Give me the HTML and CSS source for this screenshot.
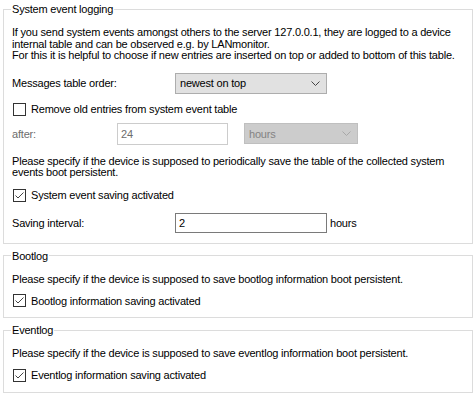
FILE: index.html
```html
<!DOCTYPE html>
<html lang="en">
<head>
    <meta charset="UTF-8">
    <title>System event logging</title>
    <link rel="stylesheet" href="styles.css">
</head>
<body>
<div class="page">
    <fieldset class="group">
        <legend>System event logging</legend>
        <p class="text">If you send system events amongst others to the server 127.0.0.1, they are logged to a device internal table and can be observed e.g. by LANmonitor.<br>For this it is helpful to choose if new entries are inserted on top or added to bottom of this table.</p>
        <div class="row row-order">
            <span class="label">Messages table order:</span>
            <div class="select">
                <span>newest on top</span>
                <svg class="chev" width="9" height="5" viewBox="0 0 9 5"><path d="M0.5 0.5 L4.5 4.5 L8.5 0.5" fill="none" stroke="#444" stroke-width="1"/></svg>
            </div>
        </div>
        <div class="check row-remove">
            <span class="box"></span>
            <span>Remove old entries from system event table</span>
        </div>
        <div class="row row-after">
            <span class="label label-off">after:</span>
            <div class="input input-off">24</div>
            <div class="select select-off">
                <span>hours</span>
                <svg class="chev" width="9" height="5" viewBox="0 0 9 5"><path d="M0.5 0.5 L4.5 4.5 L8.5 0.5" fill="none" stroke="#a8a8a8" stroke-width="1"/></svg>
            </div>
        </div>
        <p class="text text-save">Please specify if the device is supposed to periodically save the table of the collected system events boot persistent.</p>
        <div class="check row-saving">
            <span class="box box-on"><svg width="11" height="11" viewBox="0 0 11 11"><path d="M1.5 5.5 L4 8 L9.5 2.5" fill="none" stroke="#444" stroke-width="1"/></svg></span>
            <span>System event saving activated</span>
        </div>
        <div class="row row-interval">
            <span class="label">Saving interval:</span>
            <div class="input">2</div>
            <span class="unit">hours</span>
        </div>
    </fieldset>

    <fieldset class="group">
        <legend>Bootlog</legend>
        <p class="text text-short">Please specify if the device is supposed to save bootlog information boot persistent.</p>
        <div class="check row-short">
            <span class="box box-on"><svg width="11" height="11" viewBox="0 0 11 11"><path d="M1.5 5.5 L4 8 L9.5 2.5" fill="none" stroke="#444" stroke-width="1"/></svg></span>
            <span>Bootlog information saving activated</span>
        </div>
    </fieldset>

    <fieldset class="group">
        <legend>Eventlog</legend>
        <p class="text text-short">Please specify if the device is supposed to save eventlog information boot persistent.</p>
        <div class="check row-short">
            <span class="box box-on"><svg width="11" height="11" viewBox="0 0 11 11"><path d="M1.5 5.5 L4 8 L9.5 2.5" fill="none" stroke="#444" stroke-width="1"/></svg></span>
            <span>Eventlog information saving activated</span>
        </div>
    </fieldset>
</div>
</body>
</html>
```

FILE: styles.css
```css
*{
    margin: 0;
    padding: 0;
    box-sizing: border-box;
}
body{
    background: #fff;
    color: #000;
    font-family: "Liberation Sans", Arial, sans-serif;
    font-size: 11px;
    letter-spacing: -0.2px;
}
.page{
    padding: 2px 3px 0 3px;
    display: flex;
    flex-direction: column;
    gap: 5px;
    width: 476px;
}
.group{
    border: 1px solid #dcdcdc;
    padding: 0 8px 0 8px;
    min-width: 0;
}
.group legend{
    padding: 0 1px;
    margin-left: -1px;
    line-height: 14px;
}
.text{
    line-height: 11.5px;
    margin-top: 11px;
}
.text-save{
    margin-top: 11px;
}
.text-short{
    margin-top: 11px;
}
.row{
    display: flex;
    align-items: center;
}
.label{
    width: 163px;
}
.label-off{
    width: 105px;
    color: #6d6d6d;
}
.row-order{
    margin-top: 11px;
}
.select{
    width: 152px;
    height: 21px;
    border: 1px solid #adadad;
    background: #e1e1e1;
    display: flex;
    align-items: center;
    justify-content: space-between;
    padding: 0 6px 0 4px;
}
.select-off{
    width: 114px;
    margin-left: 16px;
    background: #cccccc;
    border-color: #bfbfbf;
    color: #838383;
}
.input{
    width: 152px;
    height: 20px;
    border: 1px solid #7a7a7a;
    background: #fff;
    padding: 0 3px;
    line-height: 18px;
}
.input-off{
    width: 111px;
    height: 22px;
    border-color: #cccccc;
    color: #6d6d6d;
    line-height: 20px;
}
.unit{
    margin-left: 3px;
}
.check{
    display: flex;
    align-items: center;
    gap: 5px;
    padding-left: 1px;
}
.box{
    width: 13px;
    height: 13px;
    border: 1px solid #333;
    background: #fff;
    display: flex;
    align-items: center;
    justify-content: center;
}
.box-on{
    border-color: #333;
}
.row-remove{
    margin-top: 9px;
}
.row-after{
    margin-top: 7px;
}
.row-saving{
    margin-top: 10px;
}
.row-interval{
    margin-top: 11px;
    margin-bottom: 10px;
}
.row-short{
    margin-top: 9px;
    margin-bottom: 10px;
}
```
